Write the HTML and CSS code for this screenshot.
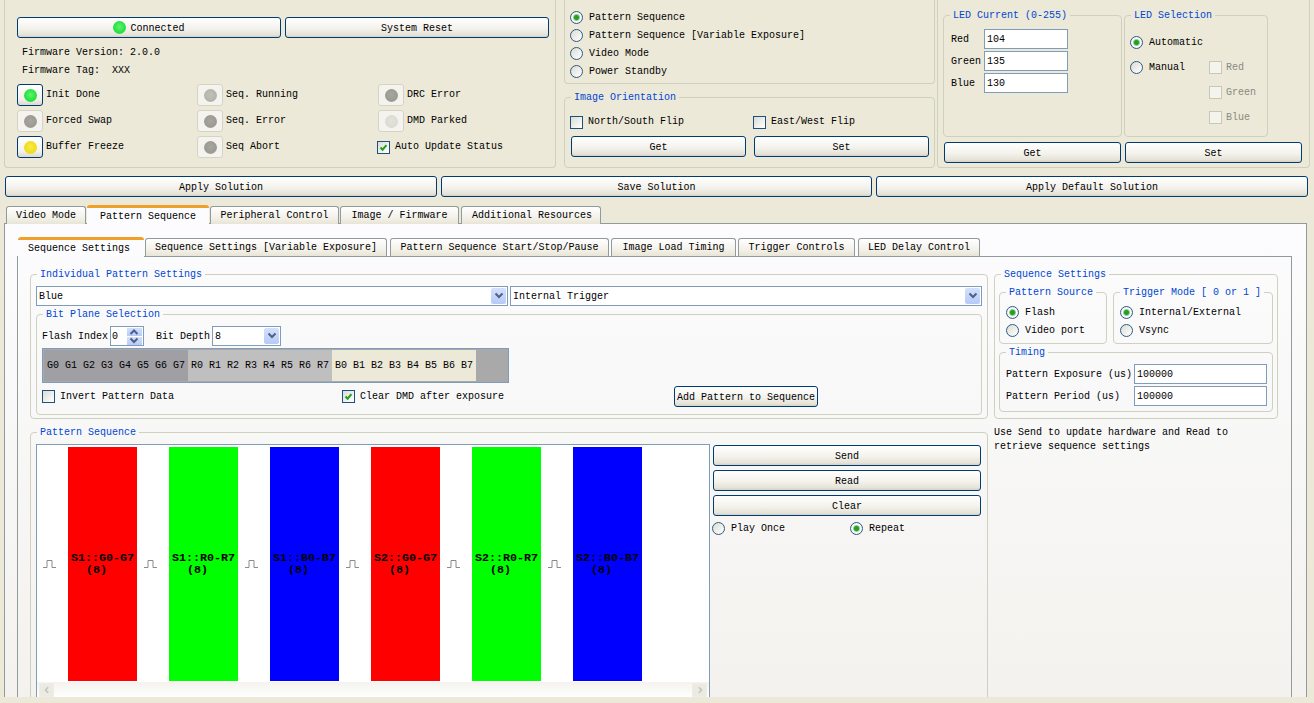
FILE: index.html
```html
<!DOCTYPE html>
<html lang="en">
<head>
<meta charset="utf-8">
<title>Control Software</title>
<link rel="stylesheet" href="styles.css">
</head>
<body>
<svg class="defs" aria-hidden="true">
  <symbol id="tick" viewBox="0 0 13 13"><path d="M3 6.5 L5.4 9 L10 3.6" fill="none" stroke="#21a121" stroke-width="2.4"/></symbol>
  <symbol id="down" viewBox="0 0 10 8"><path d="M1.5 1.5 L5 5 L8.5 1.5" fill="none" stroke="#4d6185" stroke-width="2"/></symbol>
  <symbol id="up" viewBox="0 0 10 8"><path d="M1.5 6 L5 2.5 L8.5 6" fill="none" stroke="#4d6185" stroke-width="2"/></symbol>
  <symbol id="pulse" viewBox="0 0 13 8"><path d="M0 7.5 H4 V0.5 H9 V7.5 H13" fill="none" stroke="#8a8a8a" stroke-width="1"/></symbol>
  <symbol id="sl" viewBox="0 0 10 10"><path d="M6.5 1.5 L3 5 L6.5 8.5" fill="none" stroke="#c4c4bc" stroke-width="2"/></symbol>
  <symbol id="sr" viewBox="0 0 10 10"><path d="M3.5 1.5 L7 5 L3.5 8.5" fill="none" stroke="#c4c4bc" stroke-width="2"/></symbol>
</svg>

<div class="top">
  <section class="conn-group">
    <div class="conn-row">
      <button class="btn conn-btn"><span class="led led-green"></span>Connected</button>
      <button class="btn conn-btn">System Reset</button>
    </div>
    <div class="fw fw-first">Firmware Version: 2.0.0</div>
    <div class="fw">Firmware Tag:&nbsp; XXX</div>
    <div class="status-grid">
      <div class="status"><span class="sbtn"><span class="led led-green"></span></span>Init Done</div>
      <div class="status"><span class="sbtn off"><span class="led led-pale"></span></span>Seq. Running</div>
      <div class="status"><span class="sbtn off"><span class="led led-gray"></span></span>DRC Error</div>
      <div class="status"><span class="sbtn off"><span class="led led-gray"></span></span>Forced Swap</div>
      <div class="status"><span class="sbtn off"><span class="led led-gray"></span></span>Seq. Error</div>
      <div class="status"><span class="sbtn off"><span class="led led-faint"></span></span>DMD Parked</div>
      <div class="status"><span class="sbtn"><span class="led led-yellow"></span></span>Buffer Freeze</div>
      <div class="status"><span class="sbtn off"><span class="led led-gray"></span></span>Seq Abort</div>
      <label class="opt auto"><span class="chk"><svg class="tick"><use href="#tick"/></svg></span>Auto Update Status</label>
    </div>
  </section>

  <section class="mode-col">
    <div class="mode-group">
      <label class="opt mode"><span class="rad on"></span>Pattern Sequence</label>
      <label class="opt mode"><span class="rad"></span>Pattern Sequence [Variable Exposure]</label>
      <label class="opt mode"><span class="rad"></span>Video Mode</label>
      <label class="opt mode"><span class="rad"></span>Power Standby</label>
    </div>
    <fieldset class="box orient">
      <legend>Image Orientation</legend>
      <div class="orient-checks">
        <label class="opt flip"><span class="chk"></span>North/South Flip</label>
        <label class="opt"><span class="chk"></span>East/West Flip</label>
      </div>
      <div class="orient-btns">
        <button class="btn">Get</button>
        <button class="btn">Set</button>
      </div>
    </fieldset>
  </section>

  <section class="led-group">
    <div class="led-boxes">
      <fieldset class="box led-current">
        <legend>LED Current (0-255)</legend>
        <div class="field"><span class="flabel">Red</span><input class="txt" value="104" readonly></div>
        <div class="field"><span class="flabel">Green</span><input class="txt" value="135" readonly></div>
        <div class="field"><span class="flabel">Blue</span><input class="txt" value="130" readonly></div>
      </fieldset>
      <fieldset class="box led-sel">
        <legend>LED Selection</legend>
        <div class="sel-grid">
          <label class="opt sel-wide"><span class="rad on"></span>Automatic</label>
          <label class="opt"><span class="rad"></span>Manual</label>
          <label class="opt dis"><span class="chk dim"></span>Red</label>
          <label class="opt dis sel-col2"><span class="chk dim"></span>Green</label>
          <label class="opt dis sel-col2"><span class="chk dim"></span>Blue</label>
        </div>
      </fieldset>
    </div>
    <div class="led-btns">
      <button class="btn">Get</button>
      <button class="btn">Set</button>
    </div>
  </section>
</div>

<div class="actions">
  <button class="btn">Apply Solution</button>
  <button class="btn">Save Solution</button>
  <button class="btn">Apply Default Solution</button>
</div>

<nav class="tabs tabs-main">
  <span class="tab">Video Mode</span>
  <span class="tab sel">Pattern Sequence</span>
  <span class="tab">Peripheral Control</span>
  <span class="tab">Image / Firmware</span>
  <span class="tab">Additional Resources</span>
</nav>

<main class="panel">
  <nav class="tabs tabs-sub">
    <span class="tab">Sequence Settings</span>
    <span class="tab">Sequence Settings [Variable Exposure]</span>
    <span class="tab">Pattern Sequence Start/Stop/Pause</span>
    <span class="tab">Image Load Timing</span>
    <span class="tab">Trigger Controls</span>
    <span class="tab">LED Delay Control</span>
  </nav>
  <div class="subpanel">
    <fieldset class="box indiv">
      <legend>Individual Pattern Settings</legend>
      <div class="combos">
        <div class="combo"><span>Blue</span><span class="drop"><svg class="chev"><use href="#down"/></svg></span></div>
        <div class="combo"><span>Internal Trigger</span><span class="drop"><svg class="chev"><use href="#down"/></svg></span></div>
      </div>
      <fieldset class="box bitplane">
        <legend>Bit Plane Selection</legend>
        <div class="flash-row">
          <span class="flash-label">Flash Index</span>
          <div class="spin"><span>0</span><span class="spin-btns"><span class="spin-b"><svg class="chev-s"><use href="#up"/></svg></span><span class="spin-b"><svg class="chev-s"><use href="#down"/></svg></span></span></div>
          <span class="depth-label">Bit Depth</span>
          <div class="combo depth"><span>8</span><span class="drop"><svg class="chev"><use href="#down"/></svg></span></div>
        </div>
        <div class="bits">
          <span class="bit g">G0</span><span class="bit g">G1</span><span class="bit g">G2</span><span class="bit g">G3</span><span class="bit g">G4</span><span class="bit g">G5</span><span class="bit g">G6</span><span class="bit g">G7</span>
          <span class="bit r">R0</span><span class="bit r">R1</span><span class="bit r">R2</span><span class="bit r">R3</span><span class="bit r">R4</span><span class="bit r">R5</span><span class="bit r">R6</span><span class="bit r">R7</span>
          <span class="bit b">B0</span><span class="bit b">B1</span><span class="bit b">B2</span><span class="bit b">B3</span><span class="bit b">B4</span><span class="bit b">B5</span><span class="bit b">B6</span><span class="bit b">B7</span>
        </div>
        <div class="bit-foot">
          <label class="opt invert"><span class="chk"></span>Invert Pattern Data</label>
          <label class="opt clear"><span class="chk"><svg class="tick"><use href="#tick"/></svg></span>Clear DMD after exposure</label>
          <button class="btn add">Add Pattern to Sequence</button>
        </div>
      </fieldset>
    </fieldset>

    <fieldset class="box seqset">
      <legend>Sequence Settings</legend>
      <div class="seq-top">
        <fieldset class="box source">
          <legend>Pattern Source</legend>
          <label class="opt stack"><span class="rad on"></span>Flash</label>
          <label class="opt stack"><span class="rad"></span>Video port</label>
        </fieldset>
        <fieldset class="box trigger">
          <legend>Trigger Mode [ 0 or 1 ]</legend>
          <label class="opt stack"><span class="rad on"></span>Internal/External</label>
          <label class="opt stack"><span class="rad"></span>Vsync</label>
        </fieldset>
      </div>
      <fieldset class="box timing">
        <legend>Timing</legend>
        <div class="field"><span class="tlabel">Pattern Exposure (us)</span><input class="txt wide" value="100000" readonly></div>
        <div class="field"><span class="tlabel">Pattern Period (us)</span><input class="txt wide" value="100000" readonly></div>
      </fieldset>
    </fieldset>

    <fieldset class="box sequence">
      <legend>Pattern Sequence</legend>
      <div class="seq-body">
        <div class="canvas">
          <div class="track">
            <div class="slot"><svg class="pulse"><use href="#pulse"/></svg></div>
            <div class="pbar red"><span class="pname">S1::G0-G7</span><span class="pcount">(8)</span></div>
            <div class="slot"><svg class="pulse"><use href="#pulse"/></svg></div>
            <div class="pbar green"><span class="pname">S1::R0-R7</span><span class="pcount">(8)</span></div>
            <div class="slot"><svg class="pulse"><use href="#pulse"/></svg></div>
            <div class="pbar blue"><span class="pname">S1::B0-B7</span><span class="pcount">(8)</span></div>
            <div class="slot"><svg class="pulse"><use href="#pulse"/></svg></div>
            <div class="pbar red"><span class="pname">S2::G0-G7</span><span class="pcount">(8)</span></div>
            <div class="slot"><svg class="pulse"><use href="#pulse"/></svg></div>
            <div class="pbar green"><span class="pname">S2::R0-R7</span><span class="pcount">(8)</span></div>
            <div class="slot"><svg class="pulse"><use href="#pulse"/></svg></div>
            <div class="pbar blue"><span class="pname">S2::B0-B7</span><span class="pcount">(8)</span></div>
          </div>
          <div class="hscroll">
            <span class="sbar-btn"><svg class="chev-s"><use href="#sl"/></svg></span>
            <span class="sbar-btn"><svg class="chev-s"><use href="#sr"/></svg></span>
          </div>
        </div>
        <div class="seq-ctl">
          <button class="btn">Send</button>
          <button class="btn">Read</button>
          <button class="btn">Clear</button>
          <div class="play">
            <label class="opt once"><span class="rad"></span>Play Once</label>
            <label class="opt"><span class="rad on"></span>Repeat</label>
          </div>
        </div>
      </div>
    </fieldset>

    <p class="note">Use Send to update hardware and Read to retrieve sequence settings</p>
  </div>
</main>
</body>
</html>
```

FILE: styles.css
```css
* { box-sizing: border-box; }
html, body { margin: 0; height: 703px; overflow: hidden; }
body {
  width: 1314px;
  background: #ece9d8;
  color: #000;
  font-family: "Liberation Mono", "DejaVu Sans Mono", monospace;
  font-size: 10px;
  line-height: 13px;
}
.defs { position: absolute; width: 0; height: 0; }

/* controls */
.btn {
  display: flex;
  align-items: center;
  justify-content: center;
  height: 21px;
  padding: 2px 0 0;
  border: 1px solid #003c74;
  border-radius: 3px;
  background: linear-gradient(#ffffff, #f3f2ec 55%, #e6e3d8 88%, #d6d0c5);
  color: #000;
  font: inherit;
}
.opt { display: flex; align-items: center; }
.rad {
  flex: none;
  width: 13px;
  height: 13px;
  margin-right: 6px;
  border: 1px solid #2f5a85;
  border-radius: 50%;
  background: linear-gradient(135deg, #dcdcd4, #ffffff);
}
.rad.on { background: radial-gradient(circle, #21a121 0 2px, #8fcf8f 3px, #ffffff 4px, #dcdcd4); }
.chk {
  flex: none;
  width: 13px;
  height: 13px;
  margin-right: 5px;
  border: 1px solid #1c5180;
  background: linear-gradient(135deg, #dcdcd4, #ffffff);
}
.chk.dim { border-color: #c9c7ba; background: #f4f3ec; margin-right: 4px; }
.dis { color: #8a8a80; }
.tick { display: block; width: 11px; height: 11px; }
.txt {
  height: 20px;
  width: 84px;
  padding: 1px 2px 0;
  border: 1px solid #7f9db9;
  background: #fff;
  font: inherit;
  color: #000;
}
.txt.wide { width: 133px; }
.field { display: flex; align-items: center; height: 20px; margin-bottom: 2px; }

.box {
  --pl: 0px;
  margin: 0;
  padding: 0 0 0 var(--pl);
  min-width: 0;
  border: 1px solid #d0d0bf;
  border-radius: 4px;
}
.box > legend {
  height: 12px;
  margin-left: calc(6px - var(--pl));
  padding: 0 3px;
  color: #0046d5;
  line-height: 14px;
}

/* top area */
.top { display: flex; height: 168px; padding-left: 4px; }
.conn-group, .mode-group, .led-group {
  border: 1px solid #d0d0bf;
  border-top: 0;
  border-radius: 0 0 4px 4px;
}
.conn-group { width: 552px; padding: 17px 0 0 12px; }
.conn-row { display: flex; gap: 4px; }
.conn-btn { width: 264px; }
.fw { height: 19px; padding-left: 5px; display: flex; align-items: center; }
.fw-first { height: 18px; margin-top: 5px; }
.status-grid {
  display: grid;
  grid-template-columns: 180px 181px 170px;
  grid-auto-rows: 26px;
  margin-top: 2px;
  line-height: 12px;
}
.status { display: flex; align-items: center; }
.sbtn {
  display: flex;
  align-items: center;
  justify-content: center;
  width: 26px;
  height: 22px;
  margin-right: 3px;
  border: 1px solid #003c74;
  border-radius: 3px;
  background: linear-gradient(#ffffff, #f3f2ec 70%, #dcd8cc);
}
.sbtn.off { border-color: #d5d3c8; background: #f4f3ee; }
.led {
  display: block;
  width: 13px;
  height: 13px;
  border-radius: 50%;
}
.led-green { background: radial-gradient(circle at 50% 45%, #5cf56e, #22e03c 65%, #7fdc8c); }
.led-yellow { background: radial-gradient(circle at 50% 45%, #f8ec48, #eedc1c 65%, #e4da80); }
.led-gray { background: radial-gradient(circle at 50% 45%, #a8a79f, #9b9a92 65%, #c4c3b9); }
.led-pale { background: radial-gradient(circle at 50% 45%, #c2c1b8, #b4b3aa 65%, #d0cfc6); }
.led-faint { background: radial-gradient(circle at 50% 45%, #e4e3da, #dddcd2 65%, #d4d3c8); }
.conn-btn .led { margin: -2px 4px 0 0; }
.auto { margin-left: -1px; }

.mode-col { width: 371px; margin-left: 8px; }
.mode-group { height: 84px; padding: 8px 0 0 5px; }
.mode { height: 18px; }
.orient { height: 77px; margin-top: 7px; }
.orient-checks { display: flex; padding: 12px 0 0 5px; height: 26px; line-height: 12px; }
.flip { width: 183px; }
.orient-btns { display: flex; gap: 8px; margin: 7px 0 0 6px; }
.orient-btns .btn { width: 175px; }

.led-group { width: 373px; margin-left: 2px; padding-left: 5px; }
.led-boxes { display: flex; gap: 2px; padding-top: 9px; }
.led-current { --pl: 7px; width: 179px; height: 128px; padding-top: 8px; }
.flabel { width: 33px; }
.led-sel { --pl: 5px; width: 144px; height: 128px; padding-top: 9px; }
.sel-grid { display: grid; grid-template-columns: 79px 1fr; grid-auto-rows: 25px; }
.sel-wide { grid-column: 1 / -1; }
.sel-col2 { grid-column: 2; }
.led-btns { display: flex; gap: 4px; margin: 5px 0 0 1px; }
.led-btns .btn { width: 177px; }

.actions { display: flex; gap: 4px; margin-top: 8px; padding-left: 5px; }
.actions .btn { width: 432px; }
.actions .btn:nth-child(2) { width: 431px; }

/* tabs */
.tabs { display: flex; align-items: flex-end; position: relative; z-index: 1; }
.tab {
  display: flex;
  align-items: center;
  justify-content: center;
  height: 18px;
  border: 1px solid #919b9c;
  border-bottom: 0;
  border-radius: 3px 3px 0 0;
  background: linear-gradient(#ffffff, #f1efe6 70%, #e8e5d6);
}
.tab.sel {
  height: 20px;
  margin-bottom: -1px;
  border: 0;
  border-top: 3px solid #f0a028;
  background: #fcfcfe;
}
.tabs-main { height: 20px; margin: 7px 0 0 6px; gap: 1px; }
.tabs-main .tab:nth-child(1) { width: 80px; }
.tabs-main .tab:nth-child(2) { width: 122px; }
.tabs-main .tab:nth-child(3) { width: 129px; }
.tabs-main .tab:nth-child(4) { width: 119px; }
.tabs-main .tab:nth-child(5) { width: 140px; margin-left: 1px; padding-left: 2px; }

.panel {
  width: 1303px;
  height: 474px;
  margin: -1px 0 0 4px;
  padding: 12px 0 0 12px;
  border: 1px solid #919b9c;
  border-bottom: 0;
  background: linear-gradient(#fcfcfe, #f3f2ee);
  overflow: hidden;
}
.tabs-sub { height: 20px; margin-left: 1px; gap: 1px; }
.tabs-sub .tab:nth-child(1) { width: 126px; height: 20px; margin-bottom: -1px; padding-right: 4px; border: 0; border-top: 3px solid #f0a028; background: #fcfcfe; }
.tabs-sub .tab:nth-child(2) { width: 242px; }
.tabs-sub .tab:nth-child(3) { width: 219px; margin-left: 2px; }
.tabs-sub .tab:nth-child(4) { width: 125px; margin-left: 1px; }
.tabs-sub .tab:nth-child(5) { width: 117px; margin-left: 1px; }
.tabs-sub .tab:nth-child(6) { width: 122px; margin-left: 2px; }

.subpanel {
  display: grid;
  grid-template-columns: 958px 284px;
  grid-template-rows: 151px 300px;
  column-gap: 6px;
  row-gap: 7px;
  width: 1275px;
  height: 441px;
  padding: 11px 0 0 12px;
  border: 1px solid #919b9c;
  border-bottom: 0;
}

/* individual pattern */
.indiv { --pl: 5px; padding-top: 6px; padding-right: 5px; }
.combos { display: flex; gap: 2px; }
.combo {
  display: flex;
  align-items: center;
  justify-content: space-between;
  width: 472px;
  height: 20px;
  padding: 0 1px 0 2px;
  border: 1px solid #7f9db9;
  background: #fff;
}
.drop {
  display: flex;
  align-items: center;
  justify-content: center;
  width: 15px;
  height: 16px;
  border-radius: 2px;
  background: linear-gradient(#d4e0fc, #b6caf8);
}
.chev { width: 10px; height: 8px; }
.chev-s { display: block; width: 10px; height: 8px; }
.bitplane { --pl: 5px; height: 107px; margin-top: 2px; padding-top: 6px; }
.flash-row { display: flex; align-items: center; height: 20px; }
.flash-label { width: 68px; }
.spin {
  display: flex;
  align-items: center;
  justify-content: space-between;
  width: 34px;
  height: 20px;
  padding: 0 1px;
  border: 1px solid #7f9db9;
  background: #fff;
}
.spin-btns { display: flex; flex-direction: column; gap: 1px; }
.spin-b {
  display: block;
  width: 15px;
  height: 8px;
  padding-left: 2px;
  background: linear-gradient(#d4e0fc, #b6caf8);
}
.depth-label { width: 56px; margin-left: 12px; }
.combo.depth { width: 69px; }
.bits {
  display: flex;
  width: 467px;
  height: 35px;
  margin-top: 2px;
  padding: 1px;
  border: 1px solid #7f9db9;
  background: #a9a9a9;
}
.bit {
  display: flex;
  align-items: center;
  justify-content: center;
  width: 18px;
}
.bit.g { background: #a09fa4; }
.bit.r { background: #bfbfbf; }
.bit.b { background: #ece9d8; }
.bit-foot { display: flex; align-items: center; height: 21px; margin-top: 3px; }
.invert { width: 300px; }
.clear { width: 332px; }
.add { width: 144px; }

/* sequence settings right */
.seqset { --pl: 4px; padding-top: 6px; padding-right: 4px; }
.seq-top { display: flex; gap: 6px; }
.source { --pl: 6px; width: 108px; height: 58px; padding-top: 5px; }
.trigger { --pl: 6px; width: 160px; height: 58px; padding-top: 5px; }
.stack { height: 18px; }
.timing { --pl: 6px; width: 274px; height: 66px; margin-top: 2px; padding-top: 6px; }
.tlabel { width: 128px; }

/* pattern sequence */
.sequence { --pl: 5px; padding-top: 6px; }
.seq-body { display: flex; gap: 3px; }
.canvas {
  width: 674px;
  height: 260px;
  padding-top: 2px;
  border: 1px solid #7f9db9;
  background: #fff;
}
.track { display: flex; height: 234px; margin-left: -1px; }
.slot { display: flex; align-items: center; width: 32px; padding-left: 7px; }
.pulse { width: 13px; height: 8px; }
.pbar {
  display: flex;
  flex-direction: column;
  justify-content: center;
  width: 69px;
  padding-left: 3px;
  font-size: 11.67px;
  font-weight: 700;
  line-height: 12px;
}
.red { background: #f00; }
.green { background: #0f0; }
.blue { background: #00f; }
.pcount { padding-left: 15px; }
.hscroll {
  display: flex;
  justify-content: space-between;
  height: 16px;
  margin-top: 1px;
  padding: 1px 2px 0;
  background: linear-gradient(#f4f3ee, #ffffff);
}
.sbar-btn {
  display: flex;
  align-items: center;
  justify-content: center;
  width: 15px;
  height: 14px;
  border: 1px solid #eeede6;
  background: #ebeae3;
}
.seq-ctl { width: 268px; padding-top: 1px; }
.seq-ctl .btn { width: 100%; margin-bottom: 4px; }
.play { display: flex; height: 22px; margin: -3px 0 0 -1px; }
.once { width: 138px; }

.note { margin: 0; line-height: 14px; width: 270px; }
```
